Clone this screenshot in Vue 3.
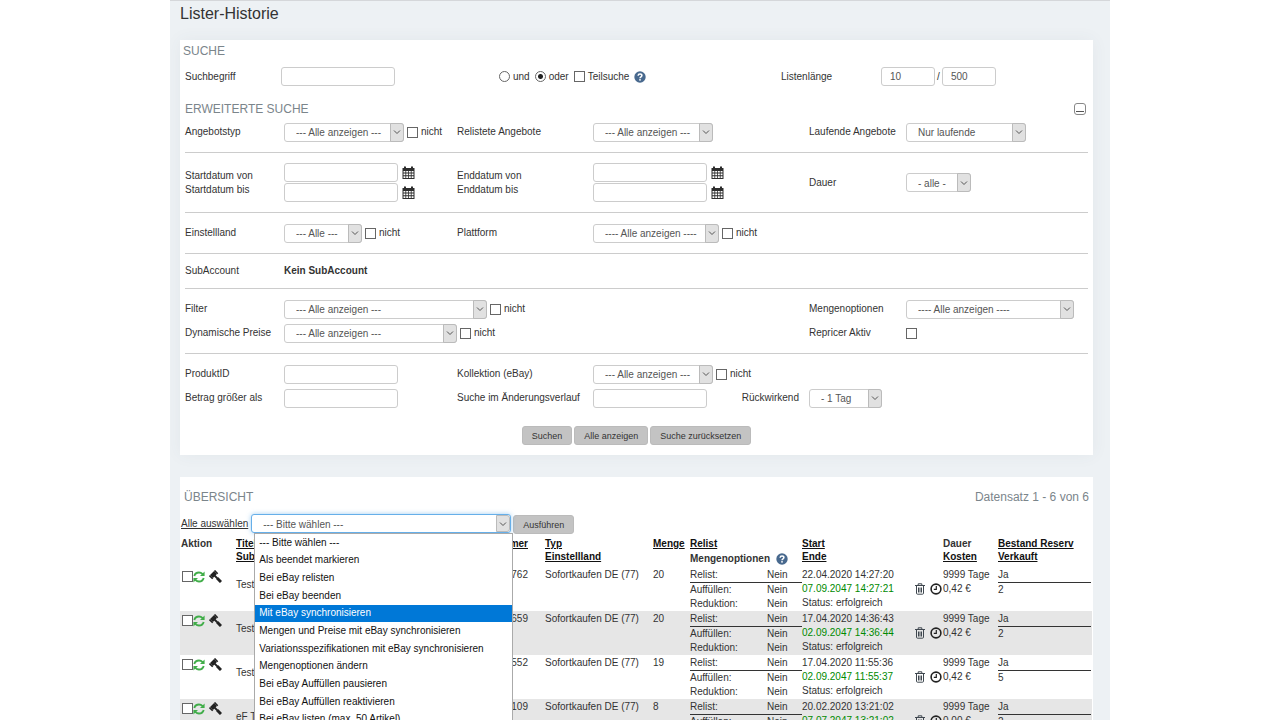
<script setup>
import { ref } from 'vue'

const und = ref('oder')
const action = ref('--- Bitte wählen ---')

const options = [
  '--- Bitte wählen ---',
  'Als beendet markieren',
  'Bei eBay relisten',
  'Bei eBay beenden',
  'Mit eBay synchronisieren',
  'Mengen und Preise mit eBay synchronisieren',
  'Variationsspezifikationen mit eBay synchronisieren',
  'Mengenoptionen ändern',
  'Bei eBay Auffüllen pausieren',
  'Bei eBay Auffüllen reaktivieren',
  'Bei eBay listen (max. 50 Artikel)'
]

const rows = [
  { title: 'Testartikel', nr: '762', qty: 20, start: '22.04.2020 14:27:20', end: '07.09.2047 14:27:21', cost: '0,42 €', sold: 2 },
  { title: 'Testartikel', nr: '659', qty: 20, start: '17.04.2020 14:36:43', end: '02.09.2047 14:36:44', cost: '0,42 €', sold: 2 },
  { title: 'Testartikel', nr: '552', qty: 19, start: '17.04.2020 11:55:36', end: '02.09.2047 11:55:37', cost: '0,42 €', sold: 5 },
  { title: 'eF Test', nr: '109', qty: 8, start: '20.02.2020 13:21:02', end: '07.07.2047 13:21:02', cost: '0,00 €', sold: 2 }
]
</script>

<template>
  <svg class="defs" aria-hidden="true">
    <symbol id="chev" viewBox="0 0 8 8"><path d="M1 2.5 4 5.5 7 2.5" fill="none" stroke="#555" /></symbol>
    <symbol id="cal" viewBox="0 0 13 13">
      <path fill="#2d2d2d" fill-rule="evenodd" d="M.5 2H2V.8Q2.800-.4 4 .8V2h5V.8Q10-.4 11 .8V2h1.500v11H.5zM1.500 5v1.600h1.900V5zm2.700 0v1.600h1.900V5zm2.700 0v1.600h1.900V5zm2.700 0v1.600h1.900V5zM1.500 7.500v1.700h1.900V7.500zm2.700 0v1.700h1.900V7.500zm2.700 0v1.700h1.900V7.500zm2.700 0v1.700h1.900V7.500zM1.500 10.200v1.800h1.900v-1.800zm2.700 0v1.800h1.900v-1.800zm2.700 0v1.800h1.900v-1.800zm2.700 0v1.800h1.900v-1.800z" />
    </symbol>
    <symbol id="help" viewBox="0 0 12 12">
      <circle cx="6" cy="6" r="5.700" fill="#48698e" />
      <path d="M4.100 4.700Q4.200 3 6 3q1.900 0 1.900 1.600C7.900 5.900 6 5.800 6 7.300" fill="none" stroke="#fff" stroke-width="1.500" />
      <rect x="5.200" y="8.100" width="1.600" height="1.500" fill="#fff" />
    </symbol>
    <symbol id="sync" viewBox="0 0 12 12">
      <path d="M1.300 5Q2.300 1.500 6 1.500q2 0 3.700 1.700M10.700 7Q9.700 10.500 6 10.500q-2 0-3.700-1.700" fill="none" stroke="#41ad49" stroke-width="1.900" />
      <path d="M11.600.4V5H7zM.4 11.600V7H5z" fill="#41ad49" />
    </symbol>
    <symbol id="gavel" viewBox="0 0 13 13">
      <path d="M6.500 2.500 2.500 6.500" stroke="#222" stroke-width="4" />
      <path d="M5.500.5 8.700 3.700M.5 5.500 3.700 8.700" stroke="#222" stroke-width="1.600" />
      <path d="M5 5 9 9" stroke="#222" stroke-width="1.800" />
      <path d="M8.300 8.300 12 12" stroke="#222" stroke-width="3" />
    </symbol>
    <symbol id="trash" viewBox="0 0 10 12">
      <path d="M0 2.500h10M3.200 2.300V.8h3.600v1.500M1.500 2.500v7.700q0 1 1 1h5q1 0 1-1V2.500M3.500 4.500v5M5 4.500v5M6.500 4.500v5" fill="none" stroke="#3f474f" />
    </symbol>
    <symbol id="clock" viewBox="0 0 12 12">
      <circle cx="6" cy="6" r="4.900" fill="none" stroke="#222" stroke-width="1.600" />
      <path d="M6.300 3v3.400H3.800" fill="none" stroke="#222" stroke-width="1.200" />
    </symbol>
  </svg>

  <main class="page">
    <h1>Lister-Historie</h1>

    <form class="card search" @submit.prevent>
      <h2 class="first">SUCHE</h2>
      <div class="top">
        <label for="term">Suchbegriff</label>
        <input id="term" class="field" type="text" />
        <div class="cell modes">
          <label><input v-model="und" type="radio" name="mode" value="und" />und</label>
          <label><input v-model="und" type="radio" name="mode" value="oder" />oder</label>
          <label><input type="checkbox" />Teilsuche</label>
          <svg class="i12"><use href="#help" /></svg>
        </div>
        <label for="len">Listenlänge</label>
        <div class="cell">
          <input id="len" class="field num" type="text" value="10" />
          <span>/</span>
          <input class="field num" type="text" value="500" aria-label="Maximum" />
        </div>
      </div>

      <div class="heading">
        <h2>ERWEITERTE SUCHE</h2>
        <button class="collapse" type="button" aria-label="Einklappen"></button>
      </div>

      <div class="group">
        <label for="typ">Angebotstyp</label>
        <div class="cell">
          <span class="pick w120"><select id="typ"><option>--- Alle anzeigen ---</option></select><i><svg><use href="#chev" /></svg></i></span>
          <label class="not"><input type="checkbox" />nicht</label>
        </div>
        <label for="rel">Relistete Angebote</label>
        <div class="cell">
          <span class="pick w120"><select id="rel"><option>--- Alle anzeigen ---</option></select><i><svg><use href="#chev" /></svg></i></span>
        </div>
        <label for="run">Laufende Angebote</label>
        <div class="cell">
          <span class="pick w120"><select id="run"><option>Nur laufende</option></select><i><svg><use href="#chev" /></svg></i></span>
        </div>
      </div>

      <div class="group">
        <div class="pair"><label for="sv">Startdatum von</label><label for="sb">Startdatum bis</label></div>
        <div class="dates">
          <div class="cell"><input id="sv" class="field" type="text" /><svg class="i13"><use href="#cal" /></svg></div>
          <div class="cell"><input id="sb" class="field" type="text" /><svg class="i13"><use href="#cal" /></svg></div>
        </div>
        <div class="pair"><label for="ev">Enddatum von</label><label for="eb">Enddatum bis</label></div>
        <div class="dates">
          <div class="cell"><input id="ev" class="field" type="text" /><svg class="i13"><use href="#cal" /></svg></div>
          <div class="cell"><input id="eb" class="field" type="text" /><svg class="i13"><use href="#cal" /></svg></div>
        </div>
        <label for="dur">Dauer</label>
        <div class="cell">
          <span class="pick w65"><select id="dur"><option>- alle -</option></select><i><svg><use href="#chev" /></svg></i></span>
        </div>
      </div>

      <div class="group">
        <label for="land">Einstellland</label>
        <div class="cell">
          <span class="pick w78"><select id="land"><option>--- Alle ---</option></select><i><svg><use href="#chev" /></svg></i></span>
          <label class="not"><input type="checkbox" />nicht</label>
        </div>
        <label for="plat">Plattform</label>
        <div class="cell">
          <span class="pick w126"><select id="plat"><option>---- Alle anzeigen ----</option></select><i><svg><use href="#chev" /></svg></i></span>
          <label class="not"><input type="checkbox" />nicht</label>
        </div>
      </div>

      <div class="group text">
        <span>SubAccount</span>
        <strong>Kein SubAccount</strong>
      </div>

      <div class="group">
        <label for="fil">Filter</label>
        <div class="cell wide">
          <span class="pick w203"><select id="fil"><option>--- Alle anzeigen ---</option></select><i><svg><use href="#chev" /></svg></i></span>
          <label class="not"><input type="checkbox" />nicht</label>
        </div>
        <label for="mo">Mengenoptionen</label>
        <div class="cell">
          <span class="pick w168"><select id="mo"><option>---- Alle anzeigen ----</option></select><i><svg><use href="#chev" /></svg></i></span>
        </div>
        <label for="dyn">Dynamische Preise</label>
        <div class="cell wide">
          <span class="pick w173"><select id="dyn"><option>--- Alle anzeigen ---</option></select><i><svg><use href="#chev" /></svg></i></span>
          <label class="not"><input type="checkbox" />nicht</label>
        </div>
        <label for="rep">Repricer Aktiv</label>
        <div class="cell"><input id="rep" type="checkbox" /></div>
      </div>

      <div class="group last">
        <label for="pid">ProduktID</label>
        <div class="cell"><input id="pid" class="field" type="text" /></div>
        <label for="kol">Kollektion (eBay)</label>
        <div class="cell wide">
          <span class="pick w120"><select id="kol"><option>--- Alle anzeigen ---</option></select><i><svg><use href="#chev" /></svg></i></span>
          <label class="not"><input type="checkbox" />nicht</label>
        </div>
        <label class="newrow" for="btr">Betrag größer als</label>
        <div class="cell"><input id="btr" class="field" type="text" /></div>
        <label for="aen">Suche im Änderungsverlauf</label>
        <div class="cell">
          <input id="aen" class="field" type="text" />
          <label class="back" for="rw">Rückwirkend</label>
        </div>
        <div class="cell">
          <span class="pick w73"><select id="rw"><option>- 1 Tag</option></select><i><svg><use href="#chev" /></svg></i></span>
        </div>
      </div>

      <div class="buttons">
        <button class="btn">Suchen</button>
        <button class="btn" type="button">Alle anzeigen</button>
        <button class="btn" type="button">Suche zurücksetzen</button>
      </div>
    </form>

    <section class="card list">
      <div class="heading over">
        <h2>ÜBERSICHT</h2>
        <span>Datensatz 1 - 6 von 6</span>
      </div>
      <div class="actions">
        <a href="#">Alle auswählen</a>
        <div class="combo">
          <span class="pick focus">
            <select v-model="action" aria-label="Aktion wählen"><option v-for="o in options" :key="o">{{ o }}</option></select><i><svg><use href="#chev" /></svg></i>
          </span>
          <ul class="menu" role="listbox" aria-label="Aktionen">
            <li v-for="(o, n) in options" :key="o" role="option" :class="{ on: n === 4 }" :aria-selected="n === 4">{{ o }}</li>
          </ul>
        </div>
        <button class="btn run" type="button">Ausführen</button>
      </div>

      <table>
        <colgroup>
          <col class="c-act" /><col /><col class="c-typ" /><col class="c-typ" /><col class="c-qty" />
          <col class="c-mid" /><col class="c-mid" /><col class="c-ico" /><col class="c-dur" /><col class="c-last" />
        </colgroup>
        <thead>
          <tr>
            <th>Aktion</th>
            <th><a href="#">Titel</a><br /><a href="#">Subtitel</a></th>
            <th class="nr"><a href="#">Nummer</a></th>
            <th><a href="#">Typ</a><br /><a href="#">Einstellland</a></th>
            <th><a href="#">Menge</a></th>
            <th class="rel"><a href="#">Relist</a><div class="mo">Mengenoptionen <svg class="i12"><use href="#help" /></svg></div></th>
            <th><a href="#">Start</a><br /><a href="#">Ende</a></th>
            <th></th>
            <th><span>Dauer</span><br /><a href="#">Kosten</a></th>
            <th><a href="#">Bestand Reserv</a><br /><a href="#">Verkauft</a></th>
          </tr>
        </thead>
        <tbody>
          <tr v-for="r in rows" :key="r.nr">
            <td>
              <div class="icons">
                <input type="checkbox" aria-label="Auswählen" />
                <svg class="i12"><use href="#sync" /></svg>
                <svg class="i13"><use href="#gavel" /></svg>
              </div>
            </td>
            <td class="title">{{ r.title }}</td>
            <td class="nr">{{ r.nr }}</td>
            <td>Sofortkaufen DE (77)</td>
            <td>{{ r.qty }}</td>
            <td>
              <dl class="stock">
                <div class="rule"><dt>Relist:</dt><dd>Nein</dd></div>
                <div><dt>Auffüllen:</dt><dd>Nein</dd></div>
                <div><dt>Reduktion:</dt><dd>Nein</dd></div>
              </dl>
            </td>
            <td>{{ r.start }}<br /><span class="green">{{ r.end }}</span><br />Status: erfolgreich</td>
            <td>
              <div class="tools">
                <svg class="trash"><use href="#trash" /></svg>
                <svg class="i12"><use href="#clock" /></svg>
              </div>
            </td>
            <td>9999 Tage<br />{{ r.cost }}</td>
            <td><div class="rule">Ja</div><div>{{ r.sold }}</div></td>
          </tr>
        </tbody>
      </table>
    </section>
  </main>
</template>

<style>
html,
body {
  margin: 0;
  background: #fff;
}
</style>

<style scoped>
* {
  box-sizing: border-box;
}
.defs {
  position: absolute;
  width: 0;
  height: 0;
}
.page {
  max-width: 940px;
  height: 100vh;
  margin: 0 auto;
  padding: 0 17px 0 10px;
  overflow: hidden;
  border-top: 1px solid #d5d7da;
  background: #edf1f4;
  color: #333;
  font: 10px/14px "Liberation Sans", Arial, sans-serif;
}
h1 {
  margin: 0;
  height: 39px;
  padding-top: 3px;
  font-size: 16px;
  line-height: 20px;
  font-weight: 400;
}
h2 {
  margin: 0;
  color: #7b858b;
  font-size: 12px;
  line-height: 18px;
  font-weight: 400;
}
input,
select,
button {
  margin: 0;
  font: inherit;
  color: inherit;
}
.card {
  background: #fff;
}
.search {
  padding: 2px 5px 10px;
  box-shadow: 0 0 16px rgba(60, 80, 95, 0.06);
}
.first {
  margin-left: -2px;
}
.top {
  display: grid;
  grid-template-columns: 96px 218px 282px 100px 1fr;
  align-items: center;
  padding: 7px 0 14px;
}
.cell,
.modes label,
.not {
  display: flex;
  align-items: center;
}
.modes label {
  gap: 3px;
  margin-right: 5px;
}
.field,
select {
  appearance: none;
  height: 19px;
  border: 1px solid #ccc;
  border-radius: 3px;
  background: #fff;
  color: #555;
}
.field {
  width: 114px;
  padding: 0 8px;
}
.num {
  width: 54px;
}
.top span {
  width: 7px;
  text-align: center;
}
input[type="checkbox"],
input[type="radio"] {
  appearance: none;
  flex: none;
  width: 11px;
  height: 11px;
  border: 1px solid #666;
  background: #fff;
}
input[type="radio"] {
  border-radius: 50%;
}
input[type="radio"]:checked {
  background: radial-gradient(#222 0 2px, #fff 3px);
}
.i12 {
  width: 12px;
  height: 12px;
  flex: none;
}
.i13 {
  width: 13px;
  height: 13px;
  flex: none;
}
.heading {
  display: flex;
  justify-content: space-between;
  align-items: center;
}
.collapse {
  width: 12px;
  height: 12px;
  margin-right: 2px;
  padding: 0;
  border: 1px solid #888;
  border-radius: 3px;
  background: linear-gradient(#555, #555) center 7px / 8px 1px no-repeat #fff;
}
.group {
  display: grid;
  grid-template-columns: 99px 173px 136px 216px 97px 1fr;
  grid-auto-rows: minmax(20px, auto);
  row-gap: 4px;
  align-items: center;
  padding: 10px 0;
  border-bottom: 1px solid #ccc;
}
.heading + .group {
  padding-top: 4px;
}
.group.text {
  grid-auto-rows: auto;
}
.group.last {
  border: 0;
}
.newrow {
  grid-column: 1;
}
.wide {
  grid-column: span 3;
}
.pair {
  display: grid;
}
.dates {
  display: grid;
  row-gap: 1px;
}
.dates .cell {
  gap: 4px;
}
.not {
  gap: 3px;
  margin-left: 3px;
}
.back {
  margin: 0 10px 0 auto;
}
.pick {
  position: relative;
  display: flex;
}
.pick select {
  width: 100%;
  padding: 2px 14px 0 11px;
}
.pick i {
  position: absolute;
  top: 0;
  right: 0;
  bottom: 0;
  display: flex;
  align-items: center;
  justify-content: center;
  width: 14px;
  border: 1px solid #bbb;
  border-radius: 0 3px 3px 0;
  background: #e1e1e1;
  pointer-events: none;
}
.pick svg {
  width: 8px;
  height: 8px;
}
.w65 { width: 65px; }
.w73 { width: 73px; }
.w78 { width: 78px; }
.w120 { width: 120px; }
.w126 { width: 126px; }
.w168 { width: 168px; }
.w173 { width: 173px; }
.w203 { width: 203px; }
.buttons {
  display: flex;
  justify-content: center;
  gap: 2px;
  padding-top: 8px;
}
.btn {
  height: 19px;
  padding: 0 9px;
  border: 1px solid #bbb;
  border-radius: 3px;
  background: #c3c3c3;
  font-size: 9px;
}
.list {
  margin-top: 22px;
  padding: 11px 1px 0;
}
.over {
  padding: 0 3px;
  color: #7b858b;
  font-size: 12px;
}
.actions {
  display: flex;
  align-items: center;
  height: 19px;
  margin-top: 8px;
}
a {
  color: inherit;
}
.combo {
  position: relative;
  width: 260px;
  margin: 0 2px 0 3px;
}
.focus select {
  border-color: #66afe9;
  box-shadow: 0 0 5px rgba(102, 175, 233, 0.6);
}
.focus i {
  margin: 1px;
}
.menu {
  position: absolute;
  z-index: 1;
  top: 19px;
  left: 3px;
  display: grid;
  grid-auto-rows: 1fr;
  align-items: stretch;
  width: 259px;
  height: 196px;
  margin: 0;
  padding: 0;
  border: 1px solid #aaa;
  background: #fff;
  color: #111;
  list-style: none;
}
.menu li {
  display: flex;
  align-items: center;
  padding-left: 4px;
}
.menu .on {
  background: #0078d7;
  color: #fff;
}
.run {
  margin-top: 2px;
}
table {
  width: calc(100% + 1px);
  margin-left: -1px;
  table-layout: fixed;
  border-collapse: collapse;
}
.c-act { width: 56px; }
.c-typ { width: 108px; }
.c-qty { width: 37px; }
.c-mid { width: 112px; }
.c-ico { width: 29px; }
.c-dur { width: 55px; }
.c-last { width: 94px; }
th,
td {
  padding: 1px 0 0;
  vertical-align: top;
  text-align: left;
  white-space: nowrap;
}
th {
  height: 34px;
  padding-top: 4px;
  line-height: 13px;
}
th a {
  color: #111;
}
th:first-child,
td:first-child {
  padding-left: 1px;
}
.mo {
  display: flex;
  align-items: center;
  gap: 6px;
  margin-top: 2px;
}
tbody tr {
  height: 44px;
}
tbody tr:nth-child(even) {
  background: #e6e6e6;
}
.nr {
  padding-right: 17px;
  text-align: right;
}
.title {
  padding-top: 11px;
}
.icons {
  display: flex;
  align-items: center;
  padding: 2px 0 0 1px;
}
.icons .i13 {
  margin-left: 4px;
}
.stock {
  margin: 0;
}
.stock div {
  display: flex;
}
.rule {
  border-bottom: 1px solid #333;
}
dt {
  width: 77px;
}
dd {
  margin: 0;
}
.green {
  color: #008a00;
}
.tools {
  display: flex;
  justify-content: space-between;
  align-items: center;
  padding: 15px 1px 0;
}
.trash {
  width: 10px;
  height: 12px;
}
td:last-child {
  padding-right: 1px;
}
</style>
